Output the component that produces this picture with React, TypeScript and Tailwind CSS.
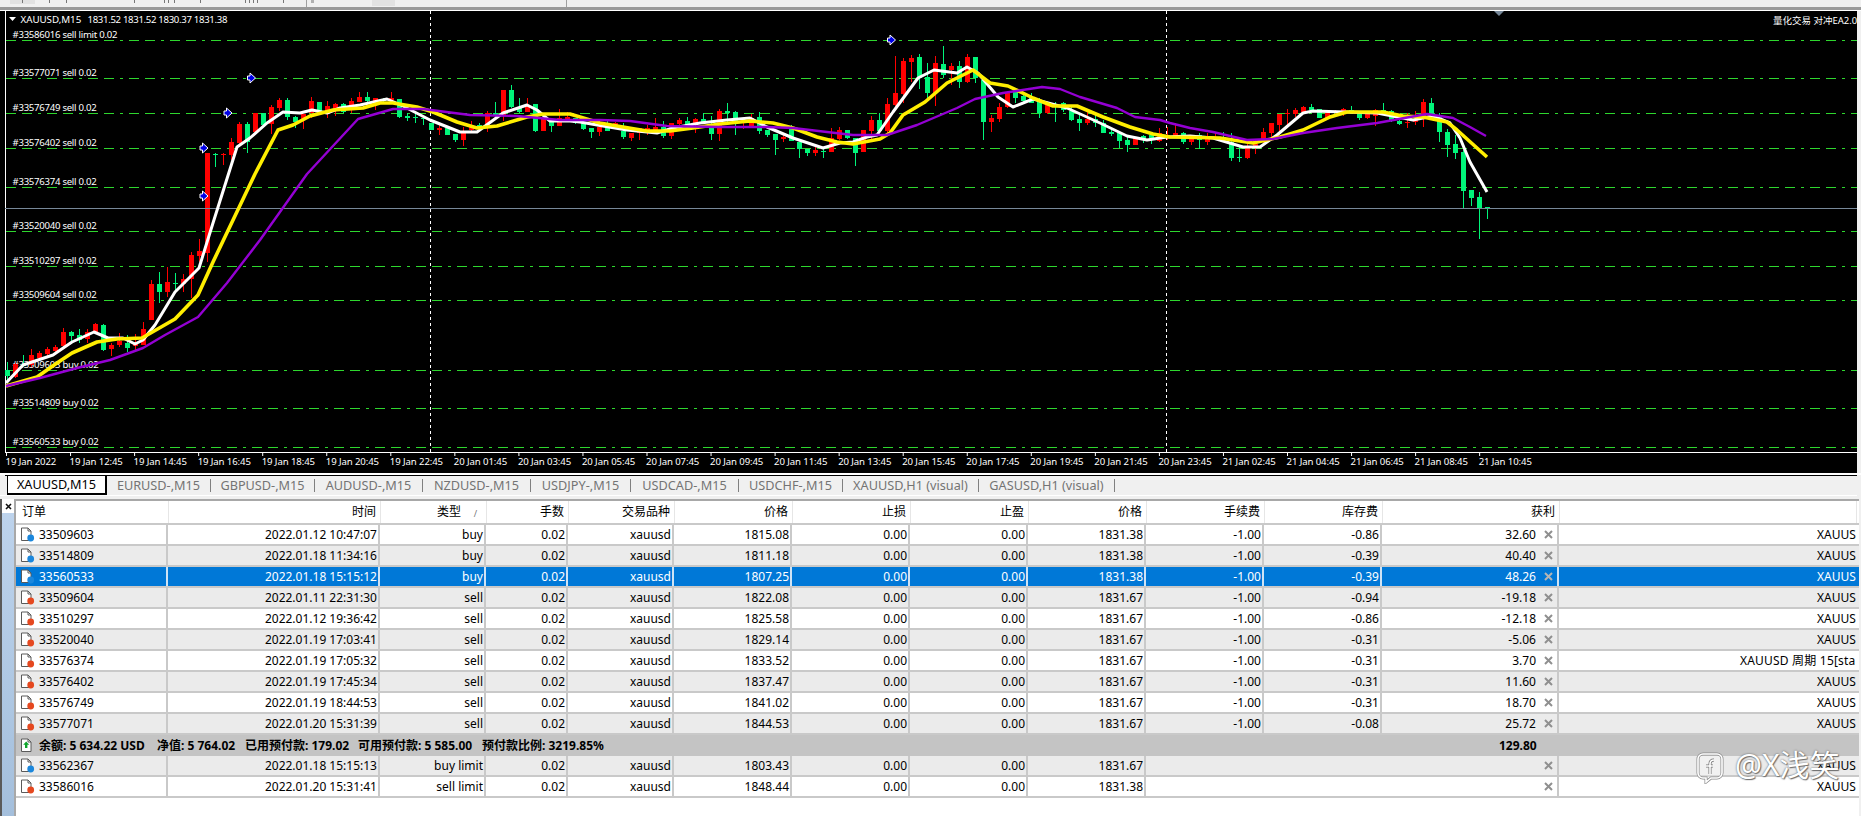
import React from "react";

type Raw = [number, number, number, number, number];

const groupA: Raw[] = [
  [0,695,720,738,750],[1,700,702,740,745],[0,675,702,708,712],[1,658,676,705,710],[1,662,668,685,690],
  [1,652,658,672,680],[1,645,650,662,668],[1,595,607,648,655],[0,602,606,618,640],[0,598,616,630,640],
  [1,597,606,628,640],[1,578,582,605,610],[0,582,585,660,662],[1,640,645,656,678],[1,610,632,645,650],
  [0,615,640,654,665],[1,612,640,648,662],[1,576,598,645,645],[1,450,462,570,570],[0,425,462,486,518],
  [1,410,456,486,502],[0,430,458,462,486],[1,433,448,462,485],[1,365,376,448,503],[1,327,364,378,395],
  [1,68,70,370,395],[0,68,72,76,110],[1,68,72,76,105],[1,25,36,76,90],
];
const groupB: Raw[] = [
  [1,85,85,140,148],[0,84,84,120,122],[1,60,66,118,147],[1,38,45,70,78],[0,38,45,95,105],
  [0,92,95,112,128],[1,88,88,105,132],[1,36,47,85,100],[0,52,52,85,88],[1,48,64,88,100],
  [1,55,58,75,93],[0,55,58,82,85],[1,40,47,62,85],[1,20,37,50,52],[0,20,35,47,52],
  [1,38,40,47,75],[0,40,42,48,50],[1,20,40,45,55],[0,42,42,96,100],[0,85,92,98,108],
  [0,88,95,100,115],[0,92,98,102,120],[0,113,113,135,135],[1,118,128,134,150],[0,130,130,150,150],
  [0,148,148,165,170],[1,125,143,165,183],[1,108,125,135,138],[0,115,120,128,130],[1,78,85,125,140],
  [0,52,84,92,95],[1,15,15,90,108],[0,0,15,65,70],[0,40,65,80,85],[1,40,60,80,82],
  [0,58,58,138,140],[1,95,95,138,138],[0,105,105,122,140],[1,72,100,122,122],[1,80,95,105,110],
];
const groupC: Raw[] = [
  [0,100,100,115,117],[0,115,115,132,134],[0,128,128,141,158],[1,125,125,141,152],[0,108,125,137,139],
  [1,112,115,125,127],[0,115,138,156,162],[1,143,143,160,167],[1,130,130,145,165],[1,120,130,140,150],
  [1,98,125,140,145],[0,108,125,152,158],[1,115,115,152,162],[1,98,105,118,125],[0,96,108,122,124],
  [1,98,102,118,143],[0,85,102,112,114],[0,92,128,147,165],[1,72,78,147,168],[0,54,78,85,110],
  [0,78,82,108,150],[1,98,105,115,132],[1,88,100,128,130],[0,82,97,137,147],[0,135,135,150,155],
  [0,148,148,164,210],[1,150,157,163,172],[0,120,130,167,169],[0,170,170,193,218],[0,192,192,203,212],
  [1,185,195,203,212],[0,190,197,200,218],[1,130,160,200,202],[1,125,135,162,164],[0,135,135,160,162],
  [0,160,160,203,242],
];
const groupD: Raw[] = [
  [1,270,270,335,337],[1,228,240,272,300],[0,220,240,272,280],[1,175,192,272,280],[1,48,158,195,200],
  [1,55,63,162,190],[1,45,53,66,125],[0,42,52,115,147],[0,70,112,160,175],[1,48,70,160,198],
  [0,18,72,105,115],[1,70,78,90,135],[0,62,78,125,145],[1,42,50,127,130],[0,50,50,115,130],
  [0,120,120,245,300],[1,225,233,245,275],[1,190,200,238,245],[1,155,155,202,205],[0,150,155,175,190],
  [0,155,168,183,185],[0,158,175,188,190],[0,175,180,220,233],[1,195,195,220,222],[0,186,195,200,245],
  [0,185,190,210,215],[0,200,212,240,242],[0,225,237,248,273],[1,215,237,248,255],[0,225,237,250,262],
  [0,240,250,278,280],[0,265,275,283,288],[0,275,278,303,325],[0,290,300,315,335],[1,295,295,315,315],
  [0,285,288,300,308],[0,280,285,295,312],[1,265,278,302,305],[1,262,288,295,300],
];
const groupE: Raw[] = [
  [1,85,114,125,127],[0,112,114,140,147],[1,128,130,140,150],[0,115,120,135,162],[1,115,130,142,150],
  [1,112,125,130,132],[0,112,125,130,132],[0,115,140,190,198],[0,150,186,188,200],[1,148,155,190,192],
  [1,135,148,158,178],[1,98,110,135,145],[1,84,84,114,130],[1,57,57,90,108],[1,42,55,58,90],
  [1,40,45,58,65],[1,32,36,52,54],[0,27,36,45,47],[0,42,42,68,70],[1,48,55,68,70],
  [1,46,48,55,57],[1,40,42,50,62],[0,33,45,50,52],[0,56,58,70,75],[1,56,58,70,72],
  [1,42,45,62,92],[0,25,45,52,54],[0,46,48,78,82],[0,76,78,88,90],[1,55,80,85,98],
  [1,48,72,82,90],[1,12,22,72,95],[0,8,24,62,65],[0,55,60,110,142],[0,102,112,150,185],
  [0,120,148,174,192],[0,165,172,288,340],[0,284,286,308,332],[0,292,306,340,432],[0,335,337,340,372],
];

type Candle = { i: number; red: boolean; h: number; t: number; b: number; l: number };
const conv = (arr: Raw[], start: number, base: number): Candle[] =>
  arr.map((r, k) => ({
    i: start + k,
    red: r[0] === 1,
    h: base + r[1] / 3,
    t: base + r[2] / 3,
    b: base + r[3] / 3,
    l: base + r[4] / 3,
  }));

const candles: Candle[] = [
  ...conv(groupA, 0, 130),
  { i: 29, red: true, h: 122, t: 124, b: 143, l: 145 },
  { i: 30, red: false, h: 122, t: 124, b: 142, l: 153 },
  ...conv(groupB, 31, 85),
  ...conv(groupC, 71, 85),
  ...conv(groupD, 107, 40),
  ...conv(groupE, 146, 95),
];

const purple =
  "6,386 40,378 77,368 110,360 143,348 165,335 198,317 227,283 260,240 307,174 358,119 393,109 423,109 470,115 517,116 560,120 600,120 630,121 667,126 720,127 767,127 793,128 827,132 853,135 887,135 917,125 957,108 975,99 1003,93 1042,87 1060,89 1080,97 1117,108 1135,117 1160,120 1170,123 1190,128 1213,132 1247,140 1273,139 1303,133 1337,128 1377,123 1410,117 1427,114 1453,118 1470,127 1486,136";
const yellow =
  "6,386 37,377 57,363 72,353 97,342 117,339 142,338 175,319 198,295 213,262 255,174 278,130 293,125 310,116 333,110 363,108 380,103 393,103 417,107 433,112 457,122 477,128 497,126 527,117 543,114 570,114 580,117 600,123 623,127 647,131 670,131 693,128 720,124 750,121 773,123 793,128 817,137 837,142 853,144 880,139 890,133 903,115 925,102 947,83 973,70 990,83 1008,86 1033,98 1053,106 1077,106 1103,117 1130,127 1153,134 1170,137 1220,138 1253,143 1280,137 1303,130 1330,117 1347,112 1383,112 1403,116 1423,117 1447,122 1457,130 1487,157";
const white =
  "6,383 23,365 53,355 72,342 94,332 108,338 123,338 135,344 143,340 155,325 175,292 199,268 213,223 237,147 250,138 267,123 283,112 300,113 312,110 327,113 340,108 360,105 387,99 403,106 430,120 460,132 477,132 503,113 527,105 537,110 550,121 570,121 580,122 603,126 627,130 657,133 673,128 700,123 727,120 750,118 767,127 793,138 823,148 840,143 853,142 867,137 877,135 893,112 918,78 934,70 957,73 967,67 978,73 998,97 1013,107 1033,99 1067,108 1100,123 1127,136 1147,140 1167,137 1190,136 1213,138 1243,147 1260,147 1277,135 1303,113 1313,111 1377,113 1413,120 1433,116 1450,123 1460,138 1470,162 1487,192";

const hLines = [40, 78, 113, 148, 187, 231, 266, 300, 370, 408, 447];
const labels: [string, number][] = [
  ["#33586016 sell limit 0.02", 38],
  ["#33577071 sell 0.02", 76],
  ["#33576749 sell 0.02", 111],
  ["#33576402 sell 0.02", 146],
  ["#33576374 sell 0.02", 185],
  ["#33520040 sell 0.02", 229],
  ["#33510297 sell 0.02", 264],
  ["#33509604 sell 0.02", 298],
  ["#33509603 buy 0.02", 368],
  ["#33514809 buy 0.02", 406],
  ["#33560533 buy 0.02", 445],
];
const arrows: [number, number][] = [
  [251.5, 78],
  [228, 113],
  [204, 148],
  [204, 196],
  [891.5, 40],
];
const times = [
  "19 Jan 2022","19 Jan 12:45","19 Jan 14:45","19 Jan 16:45","19 Jan 18:45","19 Jan 20:45","19 Jan 22:45",
  "20 Jan 01:45","20 Jan 03:45","20 Jan 05:45","20 Jan 07:45","20 Jan 09:45","20 Jan 11:45","20 Jan 13:45",
  "20 Jan 15:45","20 Jan 17:45","20 Jan 19:45","20 Jan 21:45","20 Jan 23:45","21 Jan 02:45","21 Jan 04:45",
  "21 Jan 06:45","21 Jan 08:45","21 Jan 10:45",
];

function Chart() {
  return (
    <svg viewBox="5 11 1852 462" width={1852} height={462} className="block bg-black">
      {labels.map(([t, y]) => (
        <text key={t} x={12.5} y={y} fontSize={9.6} letterSpacing={-0.27} className="fill-white">
          {t}
        </text>
      ))}
      <g shapeRendering="crispEdges">
        {hLines.map((y) => (
          <line key={y} x1={6} x2={1857} y1={y + 0.5} y2={y + 0.5} stroke="#2ed62e" strokeWidth={1} strokeDasharray="10 6 10 6 3 6" />
        ))}
        {[430.5, 1166.5].map((x) => (
          <line key={x} x1={x} x2={x} y1={11} y2={452} stroke="#ffffff" strokeWidth={1} strokeDasharray="3 3" />
        ))}
        <rect x={5} y={11} width={1} height={441} fill="#ffffff" />
        {candles.map((c) => {
          const x = Math.round(6.7 + 8 * c.i);
          const col = c.red ? "#ff0000" : "#00f57a";
          return (
            <g key={c.i}>
              <rect x={x} y={c.h} width={1} height={c.l - c.h} fill={col} />
              <rect x={x - 2} y={c.t} width={5} height={Math.max(1, c.b - c.t)} fill={col} />
            </g>
          );
        })}
        <line x1={5} x2={1857} y1={208.5} y2={208.5} stroke="#778899" strokeWidth={1} />
      </g>
      <polyline points={white} fill="none" stroke="#ffffff" strokeWidth={3} strokeLinejoin="round" />
      <polyline points={yellow} fill="none" stroke="#ffee00" strokeWidth={3.6} strokeLinejoin="round" />
      <polyline points={purple} fill="none" stroke="#9400d3" strokeWidth={2.4} strokeLinejoin="round" />
      {arrows.map(([x, y]) => (
        <path
          key={x + "-" + y}
          d={`M${x - 4} ${y - 2}h2.5v-3l5.5 5l-5.5 5v-3h-2.5z`}
          fill="#0000e6"
          stroke="#ffffff"
          strokeWidth={1}
        />
      ))}
      <path d="M9 17h7l-3.5 4z" fill="#ffffff" />
      <text x={20.5} y={23} fontSize={9.8} letterSpacing={-0.05} className="fill-white">
        XAUUSD,M15
      </text>
      <text x={87.5} y={23} fontSize={9.6} letterSpacing={-0.32} className="fill-white">
        1831.52 1831.52 1830.37 1831.38
      </text>
      <path d="M1494 11h10l-5 5z" fill="#778899" />
      <text x={1773} y={24} fontSize={9.5} className="fill-white">
        量化交易 对冲EA2.0
      </text>
      <rect x={5} y={452} width={1852} height={1} fill="#ffffff" />
      {times.map((t, i) => (
        <g key={t}>
          <rect x={6 + 64.05 * i} y={452} width={1} height={4} fill="#ffffff" />
          <text x={5.5 + 64.05 * i} y={465} fontSize={9.6} letterSpacing={-0.1} className="fill-white">
            {t}
          </text>
        </g>
      ))}
    </svg>
  );
}

function DocIcon({ color }: { color: "blue" | "red" | "green" }) {
  const fill = color === "blue" ? "#1b87dc" : "#e5481f";
  return (
    <svg width={15} height={15} viewBox="0 0 15 15" className="shrink-0">
      <path d="M1.5 1h6.5l3 3v9.5h-9.5z" fill="#ffffff" stroke="#5a5a5a" strokeWidth={1} />
      <path d="M8 1v3h3" fill="none" stroke="#5a5a5a" strokeWidth={1} />
      {color === "green" ? (
        <path d="M6.2 3.5l3 3.2h-1.8v3.3h-2.4v-3.3h-1.8z" fill="#0ea52c" />
      ) : (
        <circle cx={10.7} cy={11} r={3.4} fill={fill} />
      )}
    </svg>
  );
}

function CloseX({ selected }: { selected?: boolean }) {
  return (
    <svg width={9} height={9} viewBox="0 0 9 9" className="shrink-0">
      <path d="M1 1l7 7M8 1l-7 7" stroke={selected ? "#b5b5b5" : "#8f8f8f"} strokeWidth={2} />
    </svg>
  );
}

type Row = {
  id: string; time: string; type: string; open: string; now: string;
  fee?: string; swap?: string; profit?: string; long?: boolean;
};
const rowsA: Row[] = [
  { id: "33509603", time: "2022.01.12 10:47:07", type: "buy", open: "1815.08", now: "1831.38", fee: "-1.00", swap: "-0.86", profit: "32.60" },
  { id: "33514809", time: "2022.01.18 11:34:16", type: "buy", open: "1811.18", now: "1831.38", fee: "-1.00", swap: "-0.39", profit: "40.40" },
  { id: "33560533", time: "2022.01.18 15:15:12", type: "buy", open: "1807.25", now: "1831.38", fee: "-1.00", swap: "-0.39", profit: "48.26" },
  { id: "33509604", time: "2022.01.11 22:31:30", type: "sell", open: "1822.08", now: "1831.67", fee: "-1.00", swap: "-0.94", profit: "-19.18" },
  { id: "33510297", time: "2022.01.12 19:36:42", type: "sell", open: "1825.58", now: "1831.67", fee: "-1.00", swap: "-0.86", profit: "-12.18" },
  { id: "33520040", time: "2022.01.19 17:03:41", type: "sell", open: "1829.14", now: "1831.67", fee: "-1.00", swap: "-0.31", profit: "-5.06" },
  { id: "33576374", time: "2022.01.19 17:05:32", type: "sell", open: "1833.52", now: "1831.67", fee: "-1.00", swap: "-0.31", profit: "3.70", long: true },
  { id: "33576402", time: "2022.01.19 17:45:34", type: "sell", open: "1837.47", now: "1831.67", fee: "-1.00", swap: "-0.31", profit: "11.60" },
  { id: "33576749", time: "2022.01.19 18:44:53", type: "sell", open: "1841.02", now: "1831.67", fee: "-1.00", swap: "-0.31", profit: "18.70" },
  { id: "33577071", time: "2022.01.20 15:31:39", type: "sell", open: "1844.53", now: "1831.67", fee: "-1.00", swap: "-0.08", profit: "25.72" },
];
const rowsB: Row[] = [
  { id: "33562367", time: "2022.01.18 15:15:13", type: "buy limit", open: "1803.43", now: "1831.67" },
  { id: "33586016", time: "2022.01.20 15:31:41", type: "sell limit", open: "1848.44", now: "1831.38" },
];

const gridRow = "grid grid-cols-[152px_212px_106px_82px_106px_118px_118px_118px_118px_118px_118px_177px_298px]";
const gridHead = "grid grid-cols-[153px_212px_106px_82px_106px_118px_118px_118px_118px_118px_118px_177px_297px]";

function TableRow({ r, gray, sel }: { r: Row; gray: boolean; sel: boolean }) {
  const bg = sel ? "bg-[#0078d7] text-white" : gray ? "bg-[#ebebeb] text-black" : "bg-white text-black";
  const edge = sel ? "border-r-2 border-[#cfe3f5]" : "border-r-2 border-[#c9c9c9]";
  const cell = `flex items-center justify-end pr-[1px] ${edge}`;
  const plain = "flex items-center justify-end pr-[1px]";
  return (
    <div className={`${gridRow} ${bg} h-[21px] border-b-2 border-[#c9c9c9]`}>
      <div className={`flex items-center gap-[4px] pl-[4px] ${edge}`}>
        <DocIcon color={r.type.startsWith("buy") ? "blue" : "red"} />
        <span>{r.id}</span>
      </div>
      <div className={cell}>{r.time}</div>
      <div className={cell}>{r.type}</div>
      <div className={cell}>0.02</div>
      <div className={cell}>xauusd</div>
      <div className={cell}>{r.open}</div>
      <div className={cell}>0.00</div>
      <div className={cell}>0.00</div>
      <div className={cell}>{r.now}</div>
      <div className={r.fee ? cell : plain}>{r.fee ?? ""}</div>
      <div className={r.swap ? cell : plain}>{r.swap ?? ""}</div>
      <div className={`flex items-center justify-end pr-[4px] gap-[8px] ${edge}`}>
        <span>{r.profit ?? ""}</span>
        <CloseX selected={sel} />
      </div>
      <div className={`flex items-center overflow-hidden whitespace-nowrap ${r.long ? "pl-[181px] tracking-[0.2px]" : "pl-[258px]"}`}>
        {r.long ? "XAUUSD 周期 15[sta" : "XAUUS"}
      </div>
    </div>
  );
}

const tabs: [string, string][] = [
  ["EURUSD-,M15", "w-[104px]"],
  ["GBPUSD-,M15", "w-[104px]"],
  ["AUDUSD-,M15", "w-[108px]"],
  ["NZDUSD-,M15", "w-[108px]"],
  ["USDJPY-,M15", "w-[100px]"],
  ["USDCAD-,M15", "w-[108px]"],
  ["USDCHF-,M15", "w-[104px]"],
  ["XAUUSD,H1 (visual)", "w-[136px]"],
  ["GASUSD,H1 (visual)", "w-[136px]"],
];

export default function App() {
  return (
    <div className="relative w-[1861px] h-[816px] overflow-hidden bg-[#f0f0f0] font-[family-name:'Noto_Sans','Noto_Sans_CJK_SC',sans-serif] text-[12px] leading-none">
      {/* cut-off toolbar */}
      <svg width={1861} height={7} className="block bg-[#f0f0f0]">
        <rect x={10} y={0} width={25} height={4} fill="#e2e2e2" />
        <rect x={372} y={0} width={23} height={6} fill="#e2e2e2" />
        {[22, 49, 66, 134, 164, 168, 174, 200, 245, 249, 253, 257, 283].map((x) => (
          <rect key={x} x={x} y={0} width={1} height={3} fill="#777777" />
        ))}
        <rect x={306} y={0} width={1} height={7} fill="#a0a0a0" />
        <rect x={311} y={0} width={3} height={3} fill="#b0b0b0" />
        <rect x={566} y={0} width={1} height={7} fill="#a0a0a0" />
      </svg>
      <div className="h-[3px] bg-[#9a9a9a]" />
      <div className="h-[1px] bg-white" />

      {/* chart */}
      <div className="flex h-[462px]">
        <div className="w-[5px] bg-black" />
        <Chart />
        <div className="flex-1 bg-[#f0f0f0]" />
      </div>

      {/* tabs */}
      <div className="h-[2px] bg-white" />
      <div className="h-[20px] flex pl-[7px] border-t border-black bg-[#f0f0f0] text-[#747474] text-[12.7px] ml-[5px] mr-[4px]">
        <div className="w-[100px] -ml-[5px] bg-white border-l border-r-2 border-b-2 border-black text-black flex items-center justify-center">
          XAUUSD,M15
        </div>
        {tabs.map(([t, w]) => (
          <div key={t} className={`${w} flex items-center justify-center`}>
            <span className="flex-1 text-center">{t}</span>
            <span className="h-[13px] w-[1px] bg-[#808080]" />
          </div>
        ))}
      </div>
      <div className="h-[1px] bg-white mr-[4px]" />
      <div className="h-[3px]" />

      {/* terminal */}
      <div className="flex h-[317px]">
        <div className="w-[2px] bg-[#5a5a5a]" />
        <div className="w-[12px] flex flex-col">
          <div className="h-[14px] bg-white flex items-center justify-center">
            <svg width={7} height={7} viewBox="0 0 7 7">
              <path d="M1 1l5 5M6 1l-5 5" stroke="#111111" strokeWidth={1.6} />
            </svg>
          </div>
          <div className="flex-1 bg-gradient-to-b from-[#bdd3ec] to-[#a4bfdc]" />
        </div>
        <div className="w-[2px] bg-[#f0f0f0]" />
        <div className="w-[1845px] bg-white border-t-2 border-l-2 border-[#a8a8a8] -ml-[2px] flex flex-col">
          <div className={`${gridHead} h-[24px] border-b-2 border-[#c9c9c9] text-black bg-white`}>
            {[
              "订单","时间","类型","手数","交易品种","价格","止损","止盈","价格","手续费","库存费","获利","",
            ].map((h, i) => (
              <div
                key={i}
                className={`flex items-center border-r border-[#e6e6e6] ${i === 0 ? "pl-[6px]" : "justify-end pr-[4px]"} ${i === 2 ? "pr-[25px] relative" : ""}`}
              >
                {h}
                {i === 2 && <span className="absolute right-[9px] top-[8px] text-[9px] text-[#777777]">/</span>}
              </div>
            ))}
          </div>
          {rowsA.map((r, i) => (
            <TableRow key={r.id} r={r} gray={i % 2 === 1 || i === 2} sel={i === 2} />
          ))}
          <div className="h-[21px] bg-[#c4c4c4] flex items-center font-bold text-black pl-[4px]">
            <DocIcon color="green" />
            <span className="w-[4px]" />
            <span className="w-[118px] whitespace-pre">余额: 5 634.22 USD</span>
            <span className="w-[88px] whitespace-pre">净值: 5 764.02</span>
            <span className="w-[113px] whitespace-pre">已用预付款: 179.02</span>
            <span className="w-[124px] whitespace-pre">可用预付款: 5 585.00</span>
            <span className="w-[1017px] whitespace-pre">预付款比例: 3219.85%</span>
            <span>129.80</span>
          </div>
          {rowsB.map((r, i) => (
            <TableRow key={r.id} r={r} gray={i === 0} sel={false} />
          ))}
        </div>
      </div>

      {/* watermark */}
      <div className="absolute left-[1696px] top-[752px] flex items-center gap-[11px] text-white [text-shadow:0_0_2px_#555555,1px_1px_1px_#777777]">
        <svg width={28} height={32} viewBox="0 0 28 32">
          <path d="M7 2h14a5 5 0 0 1 5 5v14a5 5 0 0 1-5 5h-6l-5 4v-4H7a5 5 0 0 1-5-5V7a5 5 0 0 1 5-5z" fill="rgba(255,255,255,0.3)" stroke="#8a8a8a" strokeWidth={3} />
          <path d="M7 2h14a5 5 0 0 1 5 5v14a5 5 0 0 1-5 5h-6l-5 4v-4H7a5 5 0 0 1-5-5V7a5 5 0 0 1 5-5z" fill="none" stroke="#ffffff" strokeWidth={1.6} />
          <path d="M18 8c-3 0-4 2-4 4v10M10 14h7" fill="none" stroke="#777777" strokeWidth={3} />
          <path d="M18 8c-3 0-4 2-4 4v10M10 14h7" fill="none" stroke="#ffffff" strokeWidth={1.6} />
        </svg>
        <span className="text-[30px] -mt-[6px]">@X浅笑</span>
      </div>
    </div>
  );
}
